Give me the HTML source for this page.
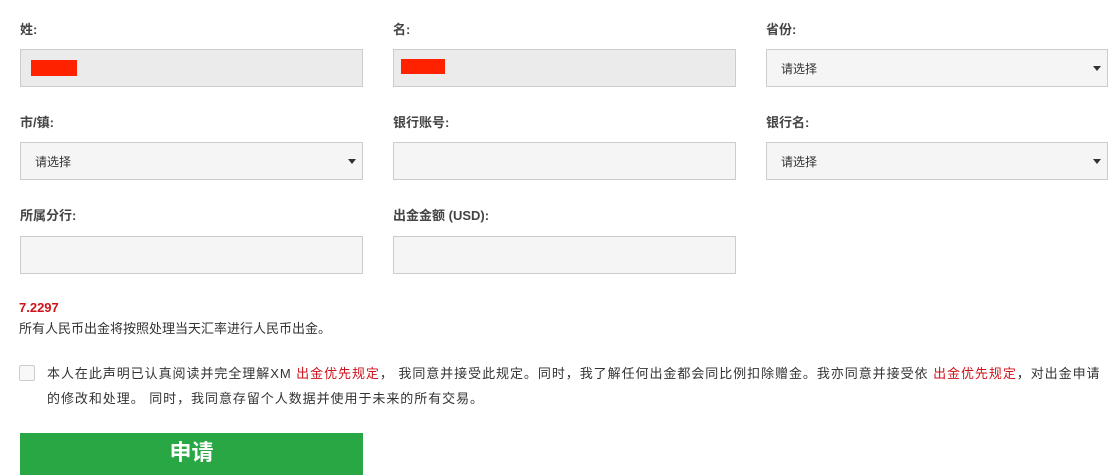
<!DOCTYPE html><html><head><meta charset="utf-8"><style>
body{margin:0;width:1120px;height:475px;overflow:hidden;background:#fff;font-family:"Liberation Sans","Noto Sans CJK SC",sans-serif;color:#333;position:relative}
.a{position:absolute}
.l{font-size:13px;font-weight:bold;color:#444}
.i{box-sizing:border-box;border:1px solid #ccc;background:#f5f5f5;height:38px}
.d{background:#ebebeb}
.s{font-size:12px;color:#333;padding:10px 0 0 14px}
.s:after{content:"";position:absolute;right:6px;top:16px;border:4px solid transparent;border-top:5px solid #333}
</style></head><body>
<div class="a l" style="left:20px;top:19px">姓:</div>
<div class="a l" style="left:393px;top:19px">名:</div>
<div class="a l" style="left:766px;top:19px">省份:</div>
<div class="a i d" style="left:20px;top:49px;width:343px"></div>
<div class="a" style="left:31px;top:60px;width:46px;height:16px;background:#ff2200"></div>
<div class="a i d" style="left:393px;top:49px;width:343px"></div>
<div class="a" style="left:401px;top:59px;width:44px;height:15px;background:#ff2200"></div>
<div class="a i s" style="left:766px;top:49px;width:342px">请选择</div>
<div class="a l" style="left:20px;top:112px">市/镇:</div>
<div class="a l" style="left:393px;top:112px">银行账号:</div>
<div class="a l" style="left:766px;top:112px">银行名:</div>
<div class="a i s" style="left:20px;top:142px;width:343px">请选择</div>
<div class="a i" style="left:393px;top:142px;width:343px"></div>
<div class="a i s" style="left:766px;top:142px;width:342px">请选择</div>
<div class="a l" style="left:20px;top:205px">所属分行:</div>
<div class="a l" style="left:393px;top:205px">出金金额 (USD):</div>
<div class="a i" style="left:20px;top:236px;width:343px"></div>
<div class="a i" style="left:393px;top:236px;width:343px"></div>
<div class="a" style="left:19px;top:300px;font-size:13px;font-weight:bold;color:#d0121b">7.2297</div>
<div class="a" style="left:19px;top:318px;font-size:13px">所有人民币出金将按照处理当天汇率进行人民币出金。</div>
<div class="a" style="left:19px;top:365px;width:14px;height:14px;border:1px solid #ccc;background:#f8f8f8;border-radius:2px"></div>
<div class="a" style="left:47px;top:361px;width:1070px;font-size:13px;line-height:25px;white-space:nowrap;letter-spacing:0.95px">本人在此声明已认真阅读并完全理解XM <span style="color:#d0121b">出金优先规定</span>， 我同意并接受此规定。同时，我了解任何出金都会同比例扣除赠金。我亦同意并接受依 <span style="color:#d0121b">出金优先规定</span>，对出金申请<br>的修改和处理。 同时，我同意存留个人数据并使用于未来的所有交易。</div>
<div class="a" style="left:20px;top:433px;width:343px;height:42px;background:#29a744;color:#fff;font-size:22px;font-weight:bold;text-align:center;line-height:40px">申请</div>
</body></html>
